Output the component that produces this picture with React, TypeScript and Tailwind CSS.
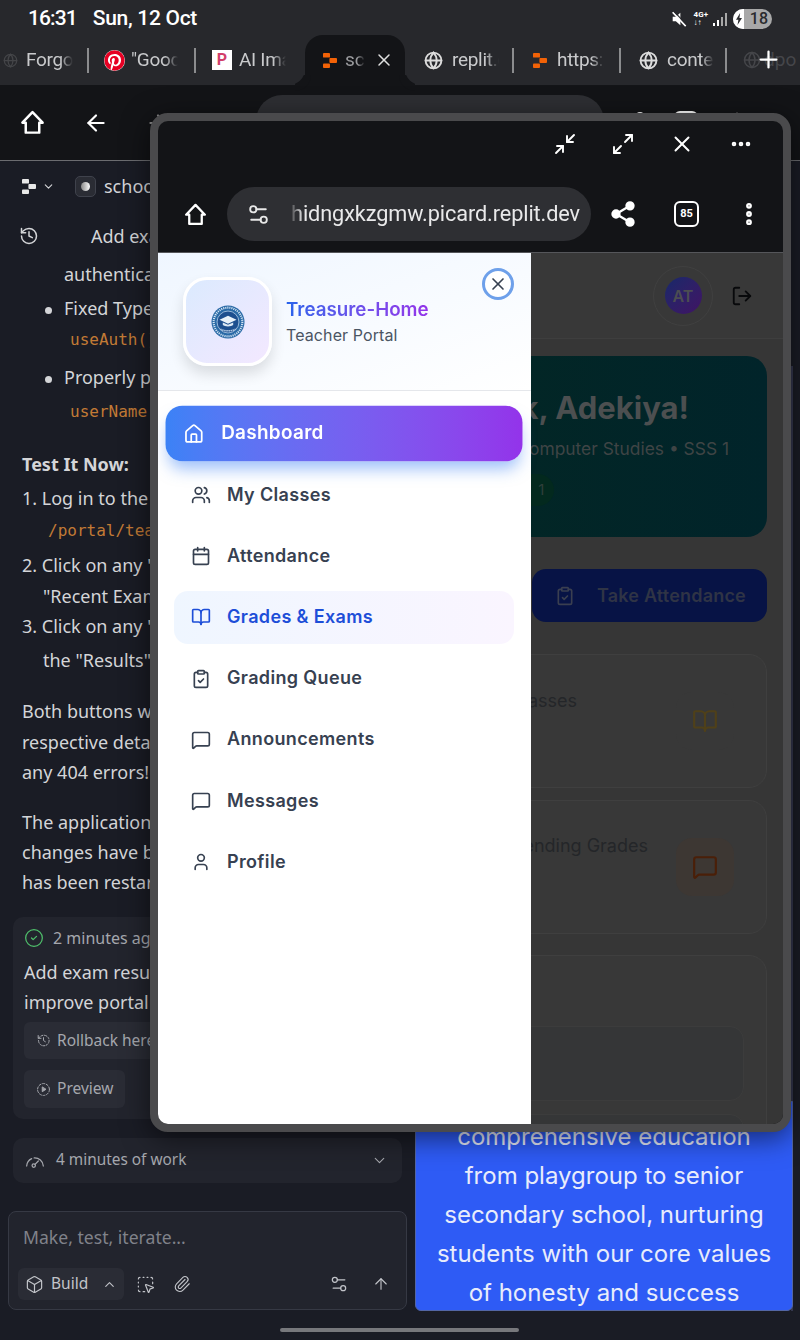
import React from "react";
import {
  Home, ArrowLeft, ArrowRight, X, Ellipsis, EllipsisVertical, Plus, Globe, Share2, ChevronDown, ChevronUp, History,
  CircleCheck, Box, SquareDashedMousePointer, Paperclip, ArrowUp, Users, Calendar, BookOpen,
  ClipboardCheck, MessageSquare, User, LogOut, Minimize2, Maximize2, Settings2,
} from "lucide-react";
import { FaPinterest } from "react-icons/fa";

const sans = "font-['Noto_Sans',sans-serif]";

function ReplitMark({ className = "", color = "#f26207" }: { className?: string; color?: string }) {
  return (
    <svg viewBox="0 0 14 15" className={className} fill={color}>
      <rect x="0" y="0" width="7" height="4.6" rx="0.9" />
      <rect x="6.4" y="5" width="7.6" height="5" rx="0.9" />
      <rect x="0" y="10.4" width="7" height="4.6" rx="0.9" />
    </svg>
  );
}

function ChromeHome({ className = "" }: { className?: string }) {
  return (
    <svg viewBox="0 0 24 24" className={className} fill="none" stroke="currentColor" strokeWidth="2.2" strokeLinejoin="round">
      <path d="M12 2.8 3 12.2h3V21h12v-8.8h3z" />
    </svg>
  );
}

function MutedSpeaker({ className = "" }: { className?: string }) {
  return (
    <svg viewBox="0 0 20 20" className={className}>
      <path d="M3 7.5h3.5L11.5 3v14l-5-4.5H3z" fill="#fff" />
      <path d="M3 2.5 17.5 18" stroke="#fff" strokeWidth="2" />
      <path d="M4.5 1.5 19 17" stroke="#27282c" strokeWidth="1.2" />
    </svg>
  );
}

function DashedHistory({ className = "" }: { className?: string }) {
  return (
    <svg viewBox="0 0 24 24" className={className} fill="none" stroke="currentColor" strokeWidth="1.6" strokeLinecap="round" strokeLinejoin="round">
      <path d="M4 12a8.5 8.5 0 1 0 2.6-6.1L3.5 8.5" strokeDasharray="3.4 2.4" />
      <path d="M3.5 4v4.5H8" />
      <path d="M12 7.5V12l3 2" />
    </svg>
  );
}

function DashedPlay({ className = "" }: { className?: string }) {
  return (
    <svg viewBox="0 0 24 24" className={className} fill="none" stroke="currentColor" strokeWidth="1.6" strokeLinecap="round">
      <circle cx="12" cy="12" r="9.5" strokeDasharray="3.4 2.6" />
      <path d="M10 8.5v7l5.5-3.5z" fill="currentColor" strokeLinejoin="round" />
    </svg>
  );
}

function WorkGauge({ className = "" }: { className?: string }) {
  return (
    <svg viewBox="0 0 24 24" className={className} fill="none" stroke="currentColor" strokeWidth="1.5" strokeLinecap="round">
      <path d="M2 18A10.5 10.5 0 0 1 8 9.2M11 8.3a10.5 10.5 0 0 1 11 9.7" />
      <circle cx="10.5" cy="17.5" r="2" />
      <path d="m12 16 4-4" />
    </svg>
  );
}

function Tab({ icon, label, sep = true, pl = 16, gap = 6, w }: { icon: React.ReactNode; label: string; sep?: boolean; pl?: number; gap?: number; w: string }) {
  return (
    <div className={`flex h-[50px] items-center ${w}`}>
      <div className="flex min-w-0 flex-1 items-center" style={{ paddingLeft: pl, gap }}>
        {icon}
        <span className="w-[47px] overflow-hidden whitespace-nowrap text-[19px] tracking-[-0.3px] text-[#c9cacc] [mask-image:linear-gradient(90deg,#000_72%,transparent)]">{label}</span>
      </div>
      {sep && <div className="h-[25px] w-[2px] shrink-0 bg-[#8b8c8e]" />}
    </div>
  );
}

function Line({ children, h = 30, pl = 64, mt = 0, className = "" }: { children: React.ReactNode; h?: number; pl?: number; mt?: number; className?: string }) {
  return (
    <div className={`whitespace-nowrap text-[18px] text-[#d4d5d8] ${className}`} style={{ height: h, lineHeight: `${h}px`, paddingLeft: pl, marginTop: mt }}>
      {children}
    </div>
  );
}

const mono = "font-['DejaVu_Sans_Mono',monospace] text-[16px] text-[#c27a35]";

function Bullet({ children }: { children: React.ReactNode }) {
  return (
    <span className="relative">
      <span className="absolute -left-[19px] top-[11px] size-[7px] rounded-full bg-[#d4d5d8]" />
      {children}
    </span>
  );
}

function LogoSeal() {
  return (
    <svg viewBox="0 0 36 36" className="size-[34px]">
      <circle cx="18" cy="18" r="17.5" fill="#2a6aa6" />
      <circle cx="18" cy="18" r="15.2" fill="none" stroke="#d5e6f5" strokeWidth="2.2" strokeDasharray="1.2 1" />
      <circle cx="18" cy="18" r="11.6" fill="#1d4f8f" />
      <circle cx="18" cy="18" r="11.6" fill="none" stroke="#bcd6ee" strokeWidth="0.8" />
      <path d="M18 11.5 27 15.6l-9 4.2-9-4.2z" fill="#e8f1f9" />
      <path d="M12.5 18.6v2.6c2 2 9 2 11 0v-2.6l-5.5 2.4z" fill="#dbe8f4" />
      <path d="M10 25.4c4 2.6 12 2.6 16 0" stroke="#cfe1f2" strokeWidth="1.5" fill="none" strokeDasharray="1.4 0.8" />
    </svg>
  );
}

const navItems = [
  { label: "My Classes", Icon: Users },
  { label: "Attendance", Icon: Calendar },
  { label: "Grades & Exams", Icon: BookOpen, active: true },
  { label: "Grading Queue", Icon: ClipboardCheck },
  { label: "Announcements", Icon: MessageSquare },
  { label: "Messages", Icon: MessageSquare },
  { label: "Profile", Icon: User },
];

function Sidebar() {
  return (
    <aside className="absolute inset-y-0 left-0 z-10 flex w-[373px] flex-col bg-white font-['Inter',sans-serif]">
      <div className="relative flex h-[138px] items-center gap-[14px] border-b border-[#e5e7eb] bg-gradient-to-br from-[#eff6ff] to-white pl-[25px]">
        <div className="flex size-[89px] items-center justify-center rounded-[24px] border-[3px] border-white bg-gradient-to-br from-[#dbeafe] to-[#f3e8ff] shadow-[0_8px_14px_rgba(0,0,0,0.12)]">
          <LogoSeal />
        </div>
        <div className="-mt-[2px]">
          <div className="bg-gradient-to-r from-[#2563eb] to-[#9333ea] bg-clip-text text-[18.8px] leading-[28px] font-semibold text-transparent">Treasure-Home</div>
          <div className="text-[16px] leading-[22px] tracking-[0.1px] text-[#4b5563]">Teacher Portal</div>
        </div>
        <button className="absolute top-[15px] right-[17px] flex size-[32px] items-center justify-center rounded-full border-[3px] border-[#6ea0ea] bg-white">
          <X className="size-[20px] text-[#374151]" strokeWidth={2} />
        </button>
      </div>
      <nav className="flex flex-col gap-[8.2px] pt-[16.4px] pr-[17px] pl-4">
        <div className="flex h-[53px] scale-105 items-center gap-[16px] rounded-[16px] bg-gradient-to-r from-[#3b82f6] to-[#9333ea] px-[17px] text-[18px] font-semibold tracking-[0.3px] text-white shadow-[0_10px_15px_-3px_rgba(59,130,246,0.5)]">
          <Home className="size-[20px]" strokeWidth={2} />
          <span className="-mt-[2px]">Dashboard</span>
        </div>
        {navItems.map(({ label, Icon, active }) => (
          <div
            key={label}
            className={`flex h-[53px] items-center gap-[16px] rounded-[14px] px-[17px] text-[18px] font-semibold tracking-[0.35px] ${
              active ? "bg-gradient-to-r from-[#eff6ff] to-[#faf5ff] text-[#1d4ed8]" : "text-[#374151]"
            }`}
          >
            <Icon className="size-[20px]" strokeWidth={2} />
            <span className="-mt-[2px]">{label}</span>
          </div>
        ))}
      </nav>
    </aside>
  );
}

function StatCard({ label, Icon, iconClass, boxClass, labelClass }: { label: string; Icon: typeof BookOpen; iconClass: string; boxClass: string; labelClass: string }) {
  return (
    <div className="flex h-[134px] items-center justify-end rounded-[18px] border border-[#3f3f3f] bg-[#383838] pr-[32px]">
      <div className={`text-[18px] whitespace-nowrap text-[#242629] ${labelClass}`}>{label}</div>
      <div className={`flex size-[58px] items-center justify-center rounded-[16px] ${boxClass}`}>
        <Icon className={`size-[26px] ${iconClass}`} strokeWidth={2} />
      </div>
    </div>
  );
}

function DimPage() {
  return (
    <div className="flex h-full flex-col overflow-hidden bg-[#363636] font-['Inter',sans-serif]">
      <div className="flex h-[86px] shrink-0 items-center justify-end gap-[18px] border-b border-[#3e3e3e] bg-[#383838] pr-[30px] pl-4">
        <div className="flex size-[60px] items-center justify-center rounded-full border border-[#404040]">
          <div className="flex size-[37px] items-center justify-center rounded-full bg-gradient-to-br from-[#14286a] to-[#3f1264] text-[16px] font-semibold text-[#4c4d52]">AT</div>
        </div>
        <LogOut className="size-[22px] text-[#08090b]" strokeWidth={2} />
      </div>
      <div className="flex flex-col px-4 pt-[17px]">
        <div className="flex h-[181px] flex-col items-end rounded-[20px] bg-gradient-to-r from-[#04281f] to-[#01242a]">
          <div className="mt-[29px] pr-[78px] text-[31px] leading-[46px] font-bold whitespace-nowrap text-[#4c4f50]">Welcome back, Adekiya!</div>
          <div className="mt-[5px] pr-[38px] text-[17.4px] leading-[26px] whitespace-nowrap text-[#3f4445]">Teaching Computer Studies • SSS 1</div>
          <div className="mt-[12px] w-full pl-[308px] text-[15px] text-[#2f3f3a]">
            <span className="inline-flex h-[32px] items-center gap-[8px] rounded-full bg-[#03291e] pr-[10px] pl-[12px]">
              <span>Term</span>
              <span>1</span>
            </span>
          </div>
        </div>
        <div className="mt-[32px] flex justify-end">
          <div className="flex h-[53px] w-[235px] items-center gap-[22px] rounded-[14px] bg-[#071345] pl-[23px] text-[18px] font-semibold tracking-[0.2px] text-[#2f3445]">
            <ClipboardCheck className="size-[20px] text-[#3a3f50]" strokeWidth={2} />
            Take Attendance
          </div>
        </div>
        <div className="mt-[32px] flex flex-col gap-[12px]">
          <StatCard label="My Classes" Icon={BookOpen} iconClass="text-[#4f4019]" boxClass="bg-[#383838]" labelClass="mr-[99px] mb-[42px]" />
          <StatCard label="Pending Grades" Icon={MessageSquare} iconClass="text-[#4a1f08]" boxClass="bg-[#3d3733]" labelClass="mr-[28px] mb-[44px]" />
        </div>
        <div className="mt-[21px] flex h-[240px] flex-col gap-[13px] rounded-[18px] border border-[#3f3f3f] bg-[#383838] px-[22px] pt-[70px]">
          <div className="h-[75px] shrink-0 rounded-[14px] border border-[#3c3c3c] bg-[#353637]" />
          <div className="h-[75px] shrink-0 rounded-[14px] border border-[#3c3c3c] bg-[#353637]" />
        </div>
      </div>
    </div>
  );
}

function FloatingWindow() {
  return (
    <div className="absolute top-[113px] left-[150px] z-20 flex h-[1019px] w-[641px] flex-col overflow-hidden rounded-[18px] border-[8px] border-[#4a4a4c] bg-[#131417] shadow-[0_6px_28px_rgba(0,0,0,0.55)]">
      <div className="flex h-[46px] shrink-0 items-center justify-end gap-[34px] pr-[30px] text-white">
        <Minimize2 className="size-[24px]" strokeWidth={1.9} />
        <Maximize2 className="size-[24px]" strokeWidth={1.9} />
        <X className="size-[26px]" strokeWidth={1.8} />
        <Ellipsis className="size-[24px]" strokeWidth={2.6} />
      </div>
      <div className="flex h-[85px] shrink-0 items-center pt-[9px] pl-[25px] text-white">
        <ChromeHome className="size-[25px]" />
        <div className="ml-[19px] flex h-[54px] w-[364px] items-center overflow-hidden rounded-full bg-[#2e2f33] pr-[11px] pl-[19px]">
          <Settings2 className="size-[25px] shrink-0 text-[#e8e8e8]" strokeWidth={1.8} />
          <div className="ml-[18px] flex min-w-0 flex-1 justify-end overflow-hidden [mask-image:linear-gradient(90deg,transparent,#000_14px)]">
            <span className="shrink-0 text-[21.7px] tracking-[-0.1px] whitespace-nowrap text-[#e9e9ea]">hidngxkzgmw.picard.replit.dev</span>
          </div>
        </div>
        <Share2 className="ml-[18px] size-[28px] fill-white" strokeWidth={2} />
        <div className="ml-[37px] flex h-[26px] w-[25px] items-center justify-center rounded-[6px] border-[2.5px] border-white text-[11px] font-bold">85</div>
        <EllipsisVertical className="ml-[36px] size-[28px]" strokeWidth={3} />
      </div>
      <div className="relative min-h-0 flex-1 border-t border-[#55565a]">
        <DimPage />
        <Sidebar />
      </div>
    </div>
  );
}

function ChatPanel() {
  return (
    <div className={`relative flex w-[415px] shrink-0 flex-col bg-[#1a1c25] ${sans}`}>
      <div className="flex h-[51px] items-center pl-[22px] text-[#d4d5d8]">
        <ReplitMark className="h-[15px] w-[14px]" color="#e8e8e8" />
        <ChevronDown className="ml-[6px] size-[13px]" />
        <div className="ml-[20px] flex size-[21px] items-center justify-center rounded-[5px] border border-[#3f424c] bg-[#2a2c34]">
          <span className="size-[9px] rounded-full bg-gradient-to-r from-[#888] to-white" />
        </div>
        <span className="ml-[8px] text-[18px]">school-portal</span>
      </div>
      <div className="relative mt-[9px]">
        <History className="absolute top-[5px] left-[19px] size-[20px] text-[#d4d5d8]" strokeWidth={1.8} />
        <Line pl={91}>Add exam results routes and</Line>
      </div>
      <Line mt={8}>authentication checks</Line>
      <Line mt={4}><Bullet>Fixed TypeScript errors in</Bullet></Line>
      <Line><span className={`${mono} ml-[6px]`}>useAuth() hook</span></Line>
      <Line mt={9}><Bullet>Properly passed the</Bullet></Line>
      <Line mt={3}><span className={`${mono} ml-[6px]`}>userName prop</span></Line>
      <Line pl={22} mt={24} className="font-bold">Test It Now:</Line>
      <Line pl={22} mt={4}>1. Log in to the teacher portal at</Line>
      <Line pl={48} mt={1}><span className={mono}>/portal/teacher</span></Line>
      <Line pl={22} mt={6}>2. Click on any "View" button in the</Line>
      <Line pl={43} mt={1}>"Recent Exams" section</Line>
      <Line pl={22} mt={0}>3. Click on any "Grade" button in</Line>
      <Line pl={43} mt={4}>the "Results" section</Line>
      <Line pl={22} mt={21}>Both buttons will navigate to their</Line>
      <Line pl={22} mt={1}>respective detail pages without</Line>
      <Line pl={22}>any 404 errors!</Line>
      <Line pl={22} mt={20}>The application is working and all</Line>
      <Line pl={22}>changes have been saved. The server</Line>
      <Line pl={22}>has been restarted.</Line>

      <div className="mt-[20px] ml-[13px] flex h-[202px] w-[389px] flex-col rounded-[10px] bg-[#22242d] pl-[11px]">
        <div className="mt-[9px] flex h-[24px] items-center">
          <CircleCheck className="size-[20px] text-[#4fbf6b]" strokeWidth={1.5} />
          <span className="ml-[9px] text-[16px] text-[#a5a7ad]">2 minutes ago</span>
        </div>
        <Line pl={0} mt={7}>Add exam results routes and</Line>
        <Line pl={0}>improve portal navigation</Line>
        <div className="mt-[5px] flex h-[37px] w-[200px] items-center gap-[6px] rounded-[6px] bg-[#2a2c35] pl-[12px] text-[15.5px] text-[#a5a7ad]">
          <DashedHistory className="size-[15px]" />
          Rollback here
        </div>
        <div className="mt-[11px] flex h-[38px] w-[101px] items-center gap-[6px] rounded-[6px] bg-[#2a2c35] pl-[12px] text-[15.5px] text-[#a5a7ad]">
          <DashedPlay className="size-[15px]" />
          Preview
        </div>
      </div>
      <div className="mt-[19px] ml-[13px] flex h-[45px] w-[389px] items-center rounded-[10px] bg-[#22242d] pr-[14px] pl-[12px] text-[15.4px] text-[#a5a7ad]">
        <WorkGauge className="size-[20px]" />
        <span className="mb-[2px] ml-[11px] flex-1">4 minutes of work</span>
        <ChevronDown className="size-[17px]" strokeWidth={1.6} />
      </div>
      <div className="mt-[28px] ml-[8px] flex h-[99px] w-[399px] flex-col rounded-[8px] border border-[#363944] bg-[#22242d]">
        <div className="mt-[11px] pl-[14px] text-[17.6px] leading-[28px] text-[#80828a]">Make, test, iterate...</div>
        <div className="mt-[17px] flex items-center pr-[16px] pl-[9px] text-[#c2c4c9]">
          <div className="flex h-[32px] w-[106px] items-center rounded-[6px] bg-[#2a2c35] pl-[7px] text-[15.5px]">
            <Box className="size-[19px]" strokeWidth={1.5} />
            <span className="ml-[7px] flex-1">Build</span>
            <ChevronUp className="mr-[7px] size-[15px]" strokeWidth={1.8} />
          </div>
          <SquareDashedMousePointer className="ml-[12px] size-[19px]" strokeWidth={1.5} />
          <Paperclip className="ml-[18px] size-[18px]" strokeWidth={1.5} />
          <Settings2 className="ml-auto size-[20px]" strokeWidth={1.5} />
          <ArrowUp className="ml-[23px] size-[18px]" strokeWidth={1.5} />
        </div>
      </div>
    </div>
  );
}

export default function App() {
  return (
    <div className="relative flex h-[1340px] w-[800px] flex-col overflow-hidden bg-[#1a1c25] font-['Roboto',sans-serif]">
      <div className="flex h-[35px] shrink-0 items-center bg-[#27282c] pt-[2px] pr-[28px] pl-[28px] text-[21px] font-medium text-white">
        <span className="tracking-[-0.9px]">16:31</span>
        <span className="ml-[16px] tracking-[-0.3px]">Sun, 12 Oct</span>
        <MutedSpeaker className="ml-auto size-[18px]" />
        <span className="ml-[6px] text-[8px] leading-[8px] font-bold">4G+<br />↓↑</span>
        <svg viewBox="0 0 18 16" className="ml-[4px] h-[16px] w-[18px]" fill="#a8a8a8">
          <rect x="1" y="12" width="2" height="3" fill="#fff" />
          <rect x="5" y="9" width="2" height="6" fill="#fff" />
          <rect x="9" y="6" width="2" height="9" />
          <rect x="13" y="2" width="2" height="13" />
        </svg>
        <div className="ml-[3px] flex h-[20px] w-[39px] items-center justify-end overflow-hidden rounded-full bg-[#a8a8a8] pr-[4px] text-[16px] leading-none font-medium text-[#2a2b2e]">
          <span className="mr-auto flex h-full w-[11px] items-center justify-center bg-white">
            <svg viewBox="0 0 10 16" className="h-[12px] w-[8px]" fill="#2a2b2e"><path d="M6.5 0 1 9h3.2L3 16l6-9.5H5.6z" /></svg>
          </span>
          18
        </div>
      </div>

      <div className="relative flex h-[50px] shrink-0 items-center bg-[#27282c]">
        <Tab w="w-[89px]" pl={3} gap={8} icon={<Globe className="size-[15px] shrink-0 text-[#444548]" />} label="Forgo" />
        <Tab w="w-[107px]" pl={15} gap={6} icon={<FaPinterest className="size-[21px] shrink-0 rounded-full bg-white text-[#e60023]" />} label={'"Good'} />
        <Tab w="w-[109px]" pl={16} gap={7} icon={<span className="flex size-[20px] shrink-0 items-center justify-center bg-white text-[16px] font-bold text-[#d23f6a]">P</span>} label="AI Image" sep={false} />
        <div className="relative z-[1] flex h-[50px] w-[100px] items-center rounded-t-[18px] bg-[#131417] pl-[18px] before:absolute before:bottom-0 before:-left-[16px] before:size-[16px] before:rounded-br-[16px] before:shadow-[6px_6px_0_#131417] after:absolute after:-right-[16px] after:bottom-0 after:size-[16px] after:rounded-bl-[16px] after:shadow-[-6px_6px_0_#131417]">
          <ReplitMark className="h-[15px] w-[14px] shrink-0" />
          <span className="ml-[8px] w-[20px] overflow-hidden text-[19px] text-[#9a9b9e] [mask-image:linear-gradient(90deg,#000_60%,transparent)]">school</span>
          <X className="ml-[9px] size-[20px] text-[#e0e0e0]" strokeWidth={1.8} />
        </div>
        <Tab w="w-[109px]" pl={19} gap={9} icon={<Globe className="size-[19px] shrink-0 text-[#dcdcdc]" strokeWidth={2.4} />} label="replit.com" />
        <Tab w="w-[107px]" pl={19} gap={10} icon={<ReplitMark className="h-[15px] w-[14px] shrink-0" />} label="https://" />
        <Tab w="w-[106px]" pl={18} gap={9} icon={<Globe className="size-[19px] shrink-0 text-[#dcdcdc]" strokeWidth={2.4} />} label="content" />
        <div className="flex h-[50px] flex-1 items-center gap-[3px] overflow-hidden pl-[16px] text-[19px] text-[#45464a]">
          <Globe className="size-[18px] shrink-0" />
          <span>dpo</span>
        </div>
        <Plus className="absolute top-[11px] right-[18px] size-[27px] text-white" strokeWidth={2} />
      </div>

      <div className="flex h-[76px] shrink-0 items-center border-b border-[#6b6c70] bg-[#131417] pl-[19px] text-white">
        <ChromeHome className="size-[27px]" />
        <ArrowLeft className="ml-[37px] size-[26px]" strokeWidth={2} />
        <ArrowRight className="ml-[36px] size-[26px] text-[#8a8a8a]" strokeWidth={2} />
        <div className="mt-[10px] ml-[85px] flex h-[54px] w-[348px] items-center justify-end self-start overflow-hidden rounded-[26px] bg-[#2e2f33] pr-[18px]">
          <span className="text-[21px] whitespace-nowrap text-[#d9d9da]">replit.com/@adekiya/school</span>
        </div>
        <Share2 className="ml-[18px] size-[24px] fill-white" strokeWidth={2} />
        <div className="ml-[28px] size-[24px] rounded-[6px] border-[2.5px] border-white" />
        <EllipsisVertical className="ml-[26px] size-[26px]" strokeWidth={3} />
      </div>

      <div className="flex min-h-0 flex-1">
        <ChatPanel />
        <div className="flex flex-1 flex-col pt-[205px] pb-[29px]">
          <div className="mr-[7px] flex flex-1 flex-col justify-end border-r-2 border-[#34374e]">
            <div className="-mr-[2px] h-[210px] rounded-b-[6px] border border-[#5366a5] bg-[#2e5bf5]">
              <div className="relative top-[2px] flex h-full flex-col justify-end text-center font-['Inter',sans-serif] text-[24px] leading-[39px] text-[#e8ecfb]">
                <div>comprehensive education</div>
                <div>from playgroup to senior</div>
                <div>secondary school, nurturing</div>
                <div>students with our core values</div>
                <div>of honesty and success</div>
              </div>
            </div>
          </div>
        </div>
      </div>

      <div className="absolute bottom-[8px] left-[280px] h-[4px] w-[239px] rounded-full bg-[#77787c]" />
      <FloatingWindow />
    </div>
  );
}
